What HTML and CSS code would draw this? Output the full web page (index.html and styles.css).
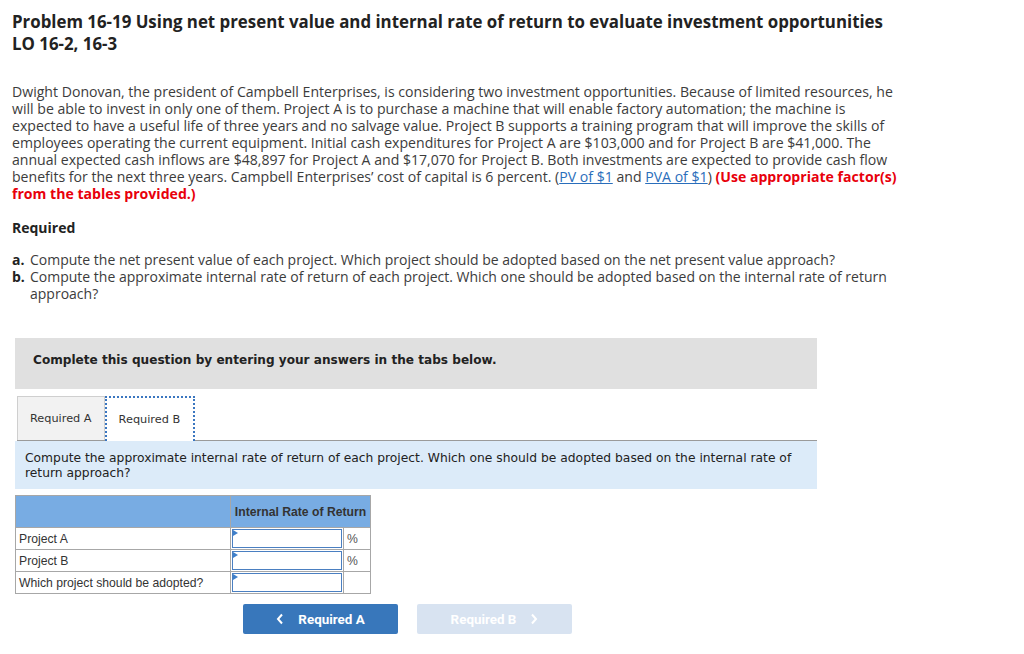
FILE: index.html
```html
<!DOCTYPE html>
<html>
<head>
<meta charset="utf-8">
<link rel="stylesheet" href="styles.css">
</head>
<body>
<div class="page">
  <h1 class="title">Problem 16-19 Using net present value and internal rate of return to evaluate investment opportunities<br>LO 16-2, 16-3</h1>
  <p class="intro">Dwight Donovan, the president of Campbell Enterprises, is considering two investment opportunities. Because of limited resources, he<br>will be able to invest in only one of them. Project A is to purchase a machine that will enable factory automation; the machine is<br>expected to have a useful life of three years and no salvage value. Project B supports a training program that will improve the skills of<br>employees operating the current equipment. Initial cash expenditures for Project A are $103,000 and for Project B are $41,000. The<br>annual expected cash inflows are $48,897 for Project A and $17,070 for Project B. Both investments are expected to provide cash flow<br>benefits for the next three years. Campbell Enterprises’ cost of capital is 6 percent. (<a class="link" href="#">PV of $1</a> and <a class="link" href="#">PVA of $1</a>) <span class="red">(Use appropriate factor(s)<br>from the tables provided.)</span></p>
  <div class="req-title">Required</div>
  <ol class="req-list">
    <li><b>a.</b><span>Compute the net present value of each project. Which project should be adopted based on the net present value approach?</span></li>
    <li><b>b.</b><span>Compute the approximate internal rate of return of each project. Which one should be adopted based on the internal rate of return<br>approach?</span></li>
  </ol>

  <div class="question">
    <div class="banner">Complete this question by entering your answers in the tabs below.</div>
    <div class="tabs">
      <div class="tab">Required A</div>
      <div class="tab active">Required B</div>
    </div>
    <div class="prompt">Compute the approximate internal rate of return of each project. Which one should be adopted based on the internal rate of<br>return approach?</div>

    <table class="grid">
      <colgroup>
        <col class="w-label">
        <col class="w-input">
        <col class="w-unit">
      </colgroup>
      <tr class="head">
        <th class="c-label"></th>
        <th class="c-val" colspan="2">Internal Rate of Return</th>
      </tr>
      <tr>
        <td class="c-label">Project A</td>
        <td class="c-input"><div class="inp"><span class="flag"></span></div></td>
        <td class="c-unit">%</td>
      </tr>
      <tr>
        <td class="c-label">Project B</td>
        <td class="c-input"><div class="inp"><span class="flag"></span></div></td>
        <td class="c-unit">%</td>
      </tr>
      <tr>
        <td class="c-label">Which project should be adopted?</td>
        <td class="c-input"><div class="inp"><span class="flag"></span></div></td>
        <td class="c-unit"></td>
      </tr>
    </table>

    <div class="nav">
      <div class="btn prev"><svg class="chev" width="8" height="12" viewBox="0 0 8 12"><polyline points="6,1.5 2,6 6,10.5" fill="none" stroke="#fff" stroke-width="2"/></svg>Required A</div>
      <div class="btn next">Required B<svg class="chev" width="8" height="12" viewBox="0 0 8 12"><polyline points="2,1.5 6,6 2,10.5" fill="none" stroke="#fff" stroke-width="2"/></svg></div>
    </div>
  </div>
</div>
</body>
</html>
```

FILE: styles.css
```css
html, body {
  margin: 0;
  padding: 0;
  background: #fff;
}

.page {
  padding: 11px 12px 0 12px;
  font-family: "Open Sans", "Liberation Sans", sans-serif;
  color: #3c3c3c;
}

.title {
  margin: 0;
  font-size: 16.85px;
  line-height: 22px;
  font-weight: 700;
  color: #222;
  white-space: nowrap;
}

.intro {
  margin: 28px 0 0 0;
  font-size: 14.1px;
  line-height: 17px;
  white-space: nowrap;
}

.link {
  color: #2a6ebb;
  text-decoration: underline;
}

.red {
  color: #e8000b;
  font-weight: 700;
}

.req-title {
  margin-top: 17px;
  font-size: 14px;
  line-height: 17px;
  font-weight: 700;
  color: #222;
}

.req-list {
  list-style: none;
  margin: 15px 0 0 0;
  padding: 0;
  font-size: 14px;
  line-height: 17px;
  white-space: nowrap;
}

.req-list li {
  display: flex;
}

.req-list li b {
  width: 18px;
  flex: none;
  color: #222;
}

.question {
  margin: 36px 0 0 3px;
  width: 802px;
}

.banner {
  background: #e0e0e0;
  height: 51px;
  box-sizing: border-box;
  padding: 14px 0 0 18px;
  font-family: "DejaVu Sans", Verdana, sans-serif;
  font-size: 12.1px;
  line-height: 17px;
  font-weight: 700;
  color: #222;
}

.tabs {
  display: flex;
  margin: 7px 0 0 2px;
  border-bottom: 1px solid #9a9a9a;
  height: 44px;
  align-items: flex-end;
}

.tab {
  height: 44px;
  box-sizing: border-box;
  padding: 0 12px;
  display: flex;
  align-items: center;
  font-family: "DejaVu Sans", Verdana, sans-serif;
  font-size: 11.3px;
  color: #333;
  background: #f2f2f2;
  border: 1px solid #cfcfcf;
  border-bottom: none;
}

.tab.active {
  background: #fff;
  border: 2px dotted #3a76c0;
  border-bottom: none;
  height: 45px;
  margin-bottom: -1px;
  padding: 0 13px 0 12px;
}

.prompt {
  background: #dcebf9;
  height: 48px;
  box-sizing: border-box;
  padding: 10px 10px 0 10px;
  font-family: "DejaVu Sans", Verdana, sans-serif;
  font-size: 12.3px;
  line-height: 15px;
  color: #222;
  white-space: nowrap;
}

.grid {
  margin-top: 6px;
  border-collapse: collapse;
  table-layout: fixed;
  width: 355px;
  font-family: "Liberation Sans", Arial, sans-serif;
  font-size: 12.2px;
  color: #333;
}

.w-label { width: 215px; }
.w-input { width: 113px; }
.w-unit { width: 27px; }

.grid th, .grid td {
  border: 1px solid #a7a7a7;
  padding: 0;
}

.grid .head th {
  background: #78ace3;
  height: 31px;
  font-weight: 700;
  color: #333;
}

.grid .c-label {
  text-align: left;
  padding-left: 3px;
  height: 21px;
  white-space: nowrap;
}

.grid .c-val {
  text-align: center;
  white-space: nowrap;
}

.grid .c-input {
  padding: 1px 1px 0 1px;
  vertical-align: top;
  height: 21px;
  box-sizing: border-box;
}

.grid .c-unit {
  padding-left: 3px;
  color: #555;
}

.inp {
  position: relative;
  height: 17px;
  border: 1px solid #4a7fc1;
  background: #fff;
}

.flag {
  position: absolute;
  left: 0;
  top: 0;
  width: 0;
  height: 0;
  border-top: 3px solid transparent;
  border-bottom: 3px solid transparent;
  border-left: 5px solid #3f7fc9;
}

.nav {
  display: flex;
  gap: 19px;
  margin: 10px 0 0 228px;
}

.btn {
  width: 155px;
  height: 30px;
  border-radius: 2px;
  display: flex;
  align-items: center;
  justify-content: center;
  font-family: "Roboto", "Liberation Sans", sans-serif;
  font-size: 13.4px;
  font-weight: 700;
  color: #fff;
}

.btn.prev {
  background: #3877bb;
}

.btn.next {
  background: #d8e3f1;
}

.chev {
  display: block;
  flex: none;
}

.prev .chev {
  margin-right: 14px;
}

.next .chev {
  margin-left: 14px;
}
```
